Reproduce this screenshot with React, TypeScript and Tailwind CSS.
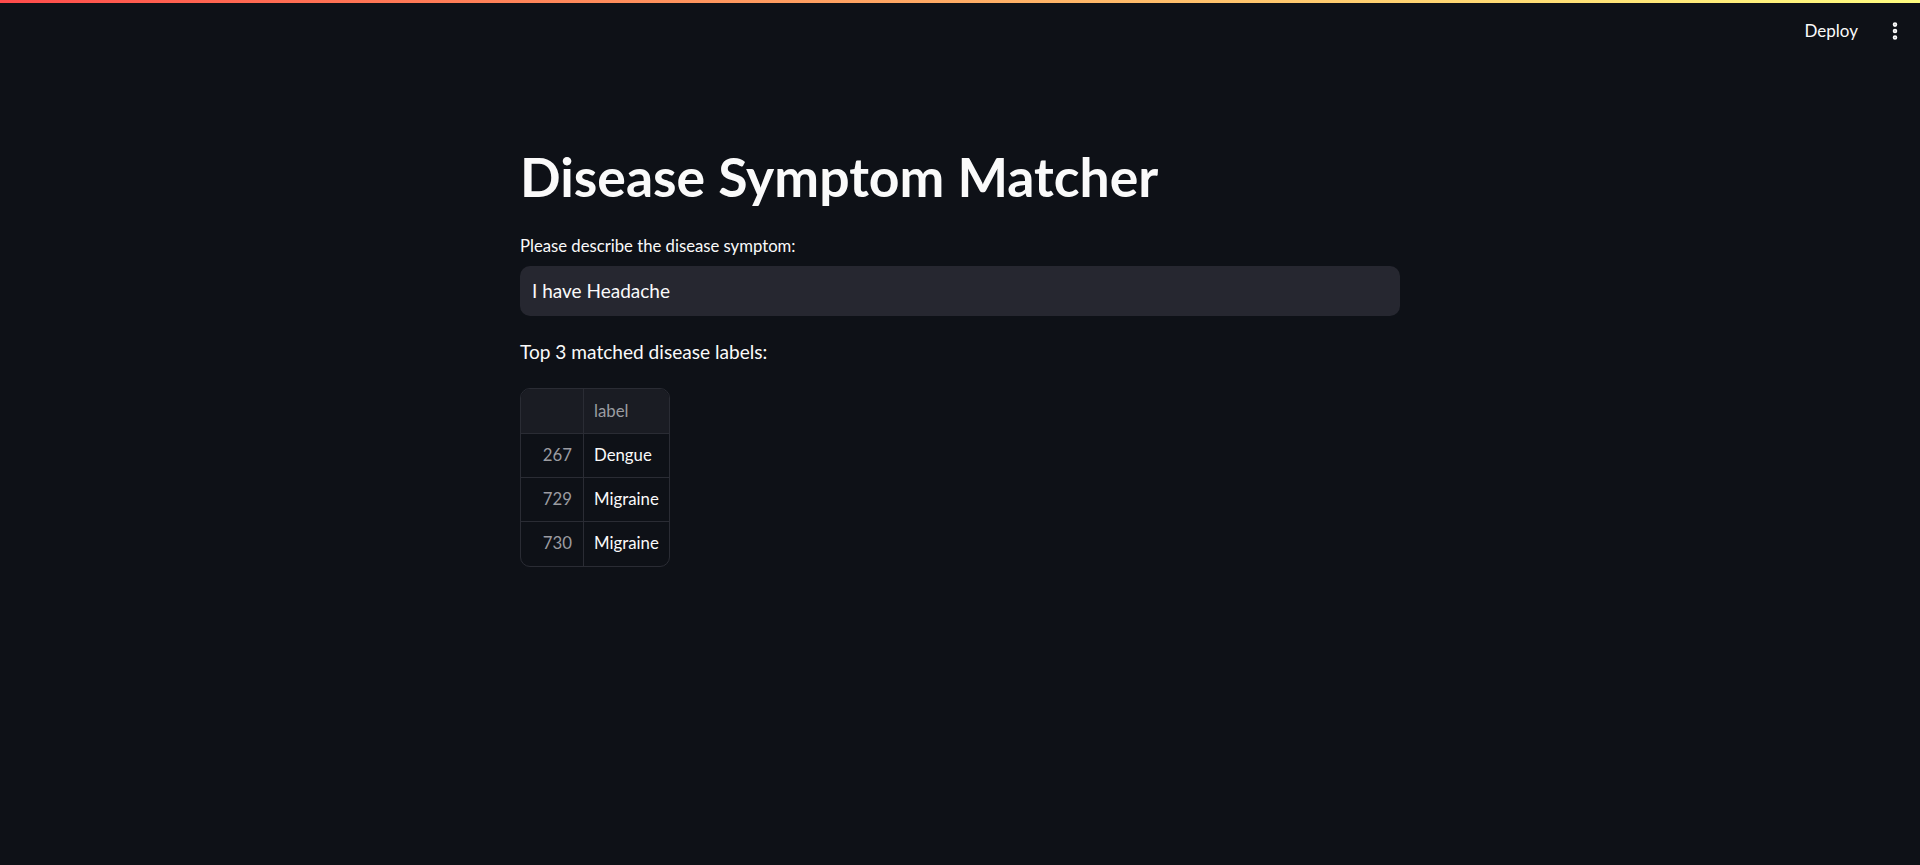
import { EllipsisVertical } from "lucide-react";

type Row = { index: number; label: string };

const rows: Row[] = [
  { index: 267, label: "Dengue" },
  { index: 729, label: "Migraine" },
  { index: 730, label: "Migraine" },
];

const ResultTable = ({ data }: { data: Row[] }) => (
  <div className="inline-grid grid-cols-[63px_85px] overflow-hidden rounded-[10px] border border-[#2a2c34] text-[16.8px]">
    {/* header row */}
    <div className="h-[45px] border-b border-r border-[#2a2c34] bg-[#1a1c23]" />
    <div className="flex h-[45px] items-center border-b border-[#2a2c34] bg-[#1a1c23] pl-[10px] text-[#9b9ca1]">
      label
    </div>
    {data.map((row, i) => (
      <div key={row.index} className="contents">
        <div
          className={
            "flex h-[44px] items-center justify-end border-r border-[#2a2c34] pr-[11px] pb-[2px] text-[#9b9ca1] " +
            (i < data.length - 1 ? "border-b" : "")
          }
        >
          {row.index}
        </div>
        <div
          className={
            "flex h-[44px] items-center border-[#2a2c34] pl-[10px] pb-[2px] text-[#fafafa] " +
            (i < data.length - 1 ? "border-b" : "")
          }
        >
          {row.label}
        </div>
      </div>
    ))}
  </div>
);

export default function App() {
  return (
    <div className="h-screen overflow-hidden bg-[#0e1117] font-['Lato','Noto_Sans',sans-serif] text-[#fafafa]">
      <div className="h-[3px] bg-gradient-to-r from-[#ff4b4b] to-[#fffd80]" />

      {/* top header */}
      <div className="flex h-[56px] items-center justify-end pr-[14px]">
        <span className="mr-[26px] text-[17px]">Deploy</span>
        <EllipsisVertical size={22} strokeWidth={3} className="text-[#fafafa]" />
      </div>

      <div className="mx-auto w-[880px] pt-[84px]">
        <h1 className="h-[66px] text-[53.5px] font-bold leading-[66px]">Disease Symptom Matcher</h1>

        <div className="mt-[24px] h-[26px] text-[16.7px] leading-[26px]">
          Please describe the disease symptom:
        </div>
        <div className="mt-[7px] flex h-[50px] items-center rounded-[10px] bg-[#262730] px-[12px] text-[19px]">
          I have Headache
        </div>

        <div className="mt-[21px] h-[30px] text-[19.1px] leading-[30px]">Top 3 matched disease labels:</div>

        <div className="mt-[21px]">
          <ResultTable data={rows} />
        </div>
      </div>
    </div>
  );
}
